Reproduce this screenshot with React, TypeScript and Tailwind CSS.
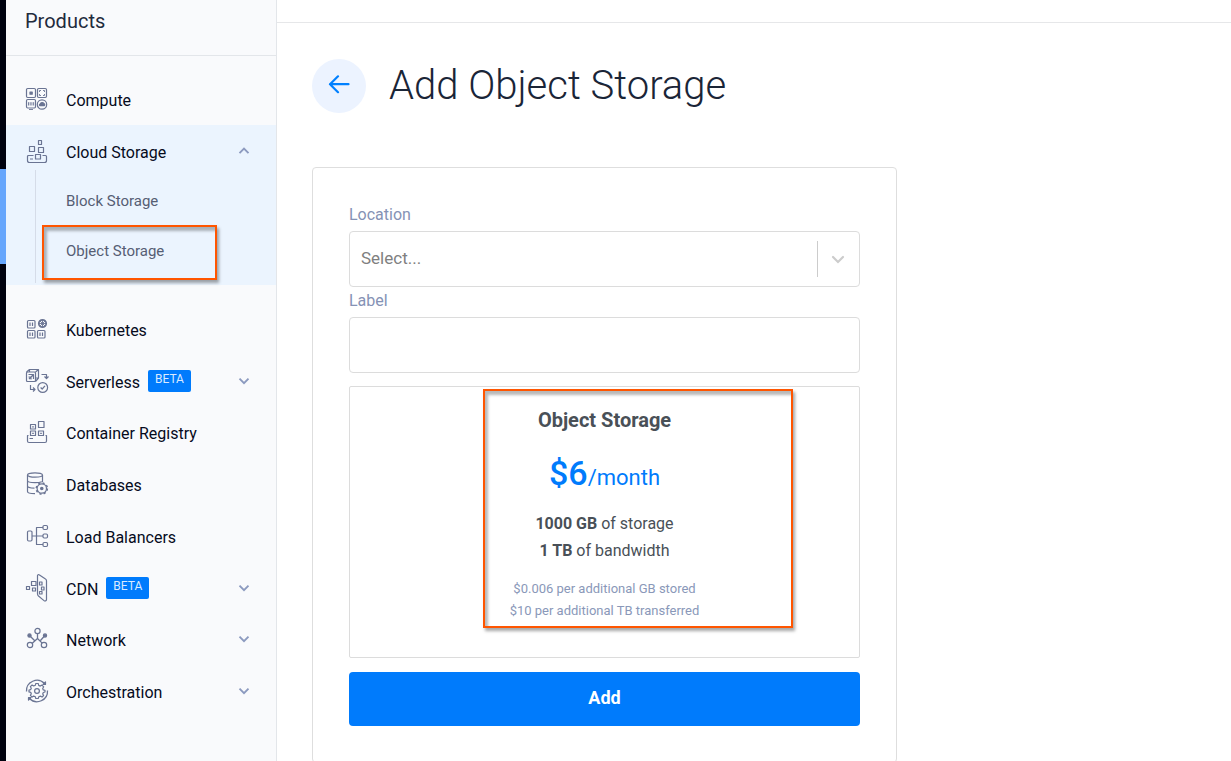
import { useState, type ReactNode } from "react";

function Icon({ children }: { children: ReactNode }) {
  return (
    <svg
      viewBox="0 0 24 30"
      fill="none"
      stroke="#6a7493"
      strokeWidth="1.2"
      strokeLinejoin="round"
      className="h-[30px] w-6 shrink-0"
      aria-hidden="true"
    >
      {children}
    </svg>
  );
}

const ComputeIcon = () => (
  <Icon>
    <rect x="1.5" y="4.5" width="9" height="9" rx="1.2" />
    <rect x="5" y="8" width="2.200" height="2.200" fill="#6a7493" />
    <rect x="12.5" y="4.5" width="9" height="9" rx="1.2" />
    <path d="M14.5 8V6.5H16M18 6.5H19.5V8M19.5 10V11.5H18M16 11.5H14.5V10" strokeWidth=".9" />
    <rect x="1.5" y="15.5" width="9" height="8.500" rx="1.2" />
    <path d="M3.5 18.2V21.5M5.2 18.2V21.5M6.9 18.2V21.5M8.6 18.2V21.5M4 25.5H8" strokeWidth=".9" />
    <circle cx="17" cy="20.5" r="4.7" />
    <path d="M15 21.7a1 1 0 0 1 .3-1.900a1.900 1.900 0 0 1 3.500-.2a1.100 1.100 0 0 1 .3 2.100z" fill="#6a7493" />
  </Icon>
);

const CloudStorageIcon = () => (
  <Icon>
    <rect x="13.5" y="4.5" width="3" height="4" />
    <rect x="4.5" y="10.5" width="5" height="5" />
    <rect x="13.5" y="11.5" width="5" height="5" />
    <rect x="10.5" y="18.5" width="5" height="4.5" />
    <path d="M8.5 19.5H3.5a1 1 0 0 0-1 1V24.5a2 2 0 0 0 2 2H19.5a2 2 0 0 0 2-2V20.5a1 1 0 0 0-1-1H17.5M5 23H8" />
  </Icon>
);

const KubernetesIcon = () => (
  <Icon>
    <rect x="2.5" y="6.5" width="7.5" height="7.5" rx="1" />
    <rect x="2.5" y="16.5" width="7.5" height="7.5" rx="1" />
    <rect x="12.5" y="16.5" width="7.5" height="7.5" rx="1" />
    <path d="M5 8.5V12M7.5 8.5V12M5 18.5V22M7.5 18.5V22M15 18.5V22M17.5 18.5V22" />
    <circle cx="17.500" cy="9.500" r="3.700" strokeWidth="1.800" />
    <path d="M14 9.500H21M17.500 6V13M15 7L20 12M20 7L15 12" strokeWidth=".9" />
  </Icon>
);

const ServerlessIcon = () => (
  <Icon>
    <rect x="1.5" y="6" width="9" height="9.5" rx="1" />
    <path d="M1.5 6L4.5 3.500H13.500V12L10.500 15.500M10.500 6L13.500 3.500M3.500 8.500H8.500V13M3.500 11H6V13.500M4 13L8.500 8.500M4.500 3.500V6M10.500 12H13.500" />
    <path d="M16.500 8.500H21.500V12M19.500 10.500L21.500 12.500L23.500 10.500M5.500 19V23.500H9.500M8 21.500L10 23.500L8 25.500" />
    <circle cx="17.700" cy="21.500" r="4.900" />
    <path d="M15.600 21.500L17.200 23L20 19.800" />
  </Icon>
);

const RegistryIcon = () => (
  <Icon>
    <rect x="5.500" y="7.500" width="5" height="4.500" />
    <rect x="13.500" y="4.500" width="5.500" height="6" />
    <rect x="5.500" y="14" width="5" height="4.500" />
    <rect x="13.500" y="14" width="5" height="4.500" />
    <path d="M7.200 9.800H8.800M7.200 16.300H8.800M15.200 16.300H16.800" />
    <path d="M3.500 18.500H2.500V24a1.500 1.500 0 0 0 1.500 1.500H20a1.500 1.500 0 0 0 1.500-1.500V18.500H20.500M4.500 21.500H8" />
  </Icon>
);

const DatabaseIcon = () => (
  <Icon>
    <ellipse cx="10" cy="6" rx="7.500" ry="2.200" />
    <path d="M2.500 6V22.500c0 1.300 3 2.200 7.500 2.200M17.500 6V13M2.500 11.500c0 1.300 3 2.200 7.500 2.200c3 0 5.500-.4 6.800-1M2.500 17c0 1.200 2.800 2 7 2.200" />
    <circle cx="16.800" cy="19.500" r="4.700" />
    <circle cx="16.800" cy="19.500" r="5.600" strokeWidth="1.400" strokeDasharray="2.200 2.200" />
    <circle cx="16.800" cy="19.500" r="1.200" fill="#6a7493" />
  </Icon>
);

const BalancerIcon = () => (
  <Icon>
    <rect x="2.500" y="10" width="4.500" height="10" rx="1.200" />
    <path d="M7 15H18M18 6.500H11.500V23.500H18" />
    <rect x="18" y="4.500" width="4.500" height="4" rx="1.200" />
    <rect x="18" y="13" width="4.500" height="4" rx="1.200" />
    <rect x="18" y="21.500" width="4.500" height="4" rx="1.200" />
  </Icon>
);

const CdnIcon = () => (
  <Icon>
    <path d="M12.500 2.500a1 1 0 0 1 1.600-.7L20.500 6a2 2 0 0 1 1 1.700V26.500a1.500 1.500 0 0 1-2.500 1.100L13.500 23a3 3 0 0 1-1-2.200z" />
    <rect x="1.500" y="13.500" width="3" height="3" />
    <rect x="6.500" y="8.500" width="4.500" height="4" />
    <rect x="7.500" y="15" width="3" height="3" />
    <path d="M14.500 9h2.500v3h-2.500zM16.500 14h2.500v3h-2.500zM14.500 18.500h2.500v2.500h-2.500z" />
  </Icon>
);

const NetworkIcon = () => (
  <Icon>
    <circle cx="12.500" cy="7" r="2.600" />
    <circle cx="5" cy="21" r="2.700" />
    <circle cx="19" cy="21" r="2.700" />
    <circle cx="4.500" cy="11.500" r="1.600" fill="#6a7493" />
    <circle cx="20" cy="11.500" r="1.600" fill="#6a7493" />
    <path d="M12.500 9.600V14.500L7 19.500M12.500 14.500L17.200 19.100M5.500 12.500L9.500 16.500M19 12.500L15.500 16.500" strokeWidth="1.300" />
  </Icon>
);

const OrchestrationIcon = () => (
  <Icon>
    <circle cx="12" cy="15" r="2.400" />
    <path d="M10.800 7.500H13.200L13.700 9.400L15.300 10.100L17 9.100L18.700 10.800L17.700 12.500L18.300 13.900L20 14.300V16L18.300 16.500L17.700 17.900L18.600 19.500L17 21.100L15.400 20.100L13.800 20.700L13.200 22.500H10.800L10.300 20.700L8.700 20.100L7.100 21.100L5.400 19.400L6.300 17.800L5.700 16.300L4 15.900V14L5.700 13.600L6.300 12.200L5.400 10.700L7.100 9L8.700 10L10.300 9.300z" strokeWidth="1.200" />
    <path d="M1.500 15.500A10.500 10.500 0 0 1 19.500 7.500M22.500 14.500A10.500 10.500 0 0 1 4.500 22.500" strokeWidth="1.300" />
    <path d="M20.500 6V8.500H18zM3.500 24V21.500H6z" fill="#6a7493" />
  </Icon>
);

function Chevron({ up = false }: { up?: boolean }) {
  return (
    <svg viewBox="0 0 12 8" className="ml-auto h-2 w-3 shrink-0" fill="none" stroke="#8c9abf" strokeWidth="1.900" aria-hidden="true">
      <path d={up ? "M1.500 6.200L6 1.700L10.500 6.200" : "M1.500 1.700L6 6.200L10.500 1.700"} />
    </svg>
  );
}

type Item = { name: string; icon: ReactNode; beta?: boolean; expandable?: boolean };

const items: Item[] = [
  { name: "Kubernetes", icon: <KubernetesIcon /> },
  { name: "Serverless", icon: <ServerlessIcon />, beta: true, expandable: true },
  { name: "Container Registry", icon: <RegistryIcon /> },
  { name: "Databases", icon: <DatabaseIcon /> },
  { name: "Load Balancers", icon: <BalancerIcon /> },
  { name: "CDN", icon: <CdnIcon />, beta: true, expandable: true },
  { name: "Network", icon: <NetworkIcon />, expandable: true },
  { name: "Orchestration", icon: <OrchestrationIcon />, expandable: true },
];

function NavLink({ name, icon, beta, expandable, open }: Item & { open?: boolean }) {
  return (
    <a href="#" className={beta ? "flex h-[51px] items-center pr-[26px] pl-[19px]" : "flex h-[52px] items-center pr-[26px] pl-[19px]"}>
      {icon}
      <span className="ml-[17px] pt-1 text-base leading-5 text-[#060b1c]">{name}</span>
      {beta && (
        <span className="ml-2 h-[22px] rounded-[2px] bg-[#007bfc] px-[7px] text-xs leading-[18px] text-[#dbeaff]">BETA</span>
      )}
      {expandable && <Chevron up={open} />}
    </a>
  );
}

function Sidebar() {
  return (
    <aside className="w-[271px] shrink-0 border-r border-[#e3e6ea] bg-[#f9fafc]">
      <h2 className="h-14 border-b border-[#e3e6ea] pt-2 pl-[19px] text-xl leading-[26px] text-[#1f2b3d]">Products</h2>
      <nav className="pt-[17px]" aria-label="Products">
        <NavLink name="Compute" icon={<ComputeIcon />} />
        <div className="relative mb-[18px] bg-[#ebf4fe] pb-3">
          <NavLink name="Cloud Storage" icon={<CloudStorageIcon />} expandable open />
          <div className="absolute top-[45px] bottom-0.5 left-[29px] w-px bg-[#d5dce8]" />
          <div className="flex flex-col gap-1 text-[15px] text-[#565e74]">
            <a href="#" className="flex h-[46px] items-center pt-0.5 pl-[60px]">Block Storage</a>
            <a href="#" className="flex h-[46px] items-center pt-0.5 pl-[60px]">Object Storage</a>
          </div>
          <div className="pointer-events-none absolute top-[100px] left-9 h-[55px] w-[175px] border-2 border-[#ff5500] shadow-[2px_3px_3px_rgba(0,0,0,0.35),inset_3px_4px_3px_rgba(0,0,0,0.28)]" />
        </div>
        {items.map((item) => (
          <NavLink key={item.name} {...item} />
        ))}
      </nav>
    </aside>
  );
}

function PlanCard() {
  return (
    <section className="relative mt-[13px] h-[272px] rounded-[2px] border border-[#dcdcdc] pt-5 text-center text-[#495057]">
      <h3 className="text-xl leading-[26px] font-bold">Object Storage</h3>
      <p className="mt-4 leading-[48px] text-[#007bfc]">
        <span className="text-[34px] font-medium">$6</span>
        <span className="text-[22px]">/month</span>
      </p>
      <p className="mt-1.5 text-base leading-[27px]">
        <b>1000 GB</b> of storage
        <br />
        <b>1 TB</b> of bandwidth
      </p>
      <p className="mt-[14px] text-[13px] leading-[22px] text-[#8a98b9]">
        $0.006 per additional GB stored
        <br />
        $10 per additional TB transferred
      </p>
      <div className="pointer-events-none absolute top-0.5 left-[133px] h-[239px] w-[310px] border-2 border-[#ff5500] shadow-[2px_3px_3px_rgba(0,0,0,0.35),inset_3px_4px_3px_rgba(0,0,0,0.28)]" />
    </section>
  );
}

export default function App() {
  const [label, setLabel] = useState("");
  return (
    <div className="flex h-screen overflow-hidden bg-white font-[Roboto,sans-serif]">
      <div className="w-1.5 shrink-0 bg-[#00020f] pt-[169px]">
        <div className="h-[95px] bg-[#66a6fc]" />
      </div>
      <Sidebar />
      <main className="min-w-0 flex-1">
        <div className="h-[23px] border-b border-[#e6e7e9]" />
        <header className="flex items-center pt-9 pl-[35px]">
          <a href="#" aria-label="Back" className="flex size-[54px] items-center justify-center rounded-full bg-[#ecf3ff]">
            <svg viewBox="0 0 22 22" className="size-[22px]" fill="none" stroke="#0080ff" strokeWidth="2.200" strokeLinecap="round" strokeLinejoin="round">
              <path d="M20.500 9.200H2M10 1.300L2 9.200L10 17.200" />
            </svg>
          </a>
          <h1 className="ml-[23px] text-[40px] leading-[50px] font-light text-[#1a2537]">Add Object Storage</h1>
        </header>
        <form className="mt-[54px] mr-6 ml-[35px] max-w-[585px] rounded border border-[#dedede] px-9 pt-9 pb-9">
          <label htmlFor="location" className="block pt-px pb-1.5 text-base leading-5 text-[#8592b5]">Location</label>
          <div className="relative">
            <select id="location" defaultValue="" className="block h-14 w-full appearance-none rounded border border-[#dcdcdc] bg-white pr-12 pl-[11px] text-[17px] text-[#808080]">
              <option value="">Select...</option>
            </select>
            <div className="pointer-events-none absolute inset-y-0 right-0 flex w-[43px] items-center">
              <div className="h-9 w-px bg-[#cccccc]" />
              <svg viewBox="0 0 14 10" className="ml-[13px] h-[10px] w-[14px]" fill="none" stroke="#cccccc" strokeWidth="2.200" strokeLinecap="round" aria-hidden="true">
                <path d="M2 3L7 8L12 3" />
              </svg>
            </div>
          </div>
          <label htmlFor="label" className="block pt-1 pb-1.5 text-base leading-5 text-[#8592b5]">Label</label>
          <input id="label" value={label} onChange={(e) => setLabel(e.target.value)} className="block h-14 w-full rounded border border-[#dcdcdc] px-3 text-base" />
          <PlanCard />
          <button type="button" className="mt-[14px] h-[54px] w-full rounded bg-[#007bfc] pb-0.5 text-lg font-bold text-white">Add</button>
        </form>
      </main>
    </div>
  );
}
